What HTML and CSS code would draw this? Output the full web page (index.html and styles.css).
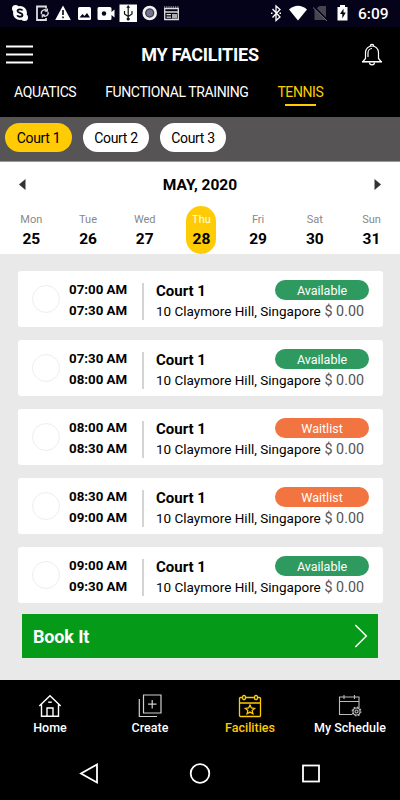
FILE: index.html
```html
<!doctype html>
<html lang="en">
	<head>
	<meta charset="utf-8">
	<title>My Facilities</title>
	<link rel="stylesheet" href="styles.css">
	</head>
	<body>

		<div class="status-bar">
			<svg class="status-left" width="163" height="27" viewBox="0 0 163 27">
				<g fill="#fff">
					<circle cx="20" cy="13" r="7"/>
					<circle cx="15.500" cy="8.500" r="3.500"/>
					<circle cx="24.500" cy="17.500" r="3.500"/>
					<path d="M63 5.500L70.800 20H55.200z"/>
					<rect x="78" y="7" width="13" height="13" rx="1.500"/>
					<path d="M99 7h11a1.500 1.500 0 0 1 1.500 1.500V12l3-2.500v8l-3-2.500v3.500a1.500 1.500 0 0 1-1.500 1.500H99a1.500 1.500 0 0 1-1.500-1.500v-10A1.500 1.500 0 0 1 99 7z"/>
					<path d="M119.500 4.500h17.500v17.500h-17.500z"/>
				</g>
				<path d="M22.500 10.500c-.5-1.500-5-1.800-5 .5 0 2.300 5 1.500 5 4 0 2.300-4.700 2.200-5.300.3" fill="none" stroke="#05031a" stroke-width="1.800"/>
				<path d="M46 8.500V6.500H37V20h9v-2" fill="none" stroke="#ddd" stroke-width="1.800"/>
				<path d="M41.500 14a3.200 3.200 0 0 1 5.500-3M48 12a3.200 3.200 0 0 1-5.500 3M47.300 8.500V11h-2.500M42.300 17.500V15h2.500" fill="none" stroke="#ddd" stroke-width="1.300"/>
				<path d="M63 10v5M63 16.500v1.800" stroke="#05031a" stroke-width="1.600"/>
				<path d="M79.500 17.500l3-3.500 2 2 2.500-3 3 4.500z" fill="#05031a"/>
				<circle cx="104" cy="13.500" r="2.200" fill="#05031a"/>
				<path d="M128.200 7v13M124.500 11v3l3.700 2.500M132 11v3l-3.800 2.500" fill="none" stroke="#111" stroke-width="1.200"/>
				<path d="M128.200 5l1.900 2.800h-3.800z" fill="#111"/>
				<circle cx="128.200" cy="19" r="1.600" fill="#111"/>
				<circle cx="149.700" cy="13" r="6" fill="#77738a" stroke="#f2f2f2" stroke-width="2.600"/>
				<circle cx="149.700" cy="13" r="4" fill="none" stroke="#37344a" stroke-width=".9"/>
			</svg>
			<svg width="18" height="27" viewBox="0 0 18 27">
				<path d="M1.700 8.500h13.600v11H1.700zM1 12h15M3.500 14.700H8M3.500 17.200H8" fill="none" stroke="#ddd" stroke-width="1.300"/>
				<path d="M1 7h15" stroke="#ddd" stroke-dasharray="1.200 1"/>
				<path d="M9 14h5v4.500H9z" fill="#aaa"/>
			</svg>
			<svg class="status-right" width="82" height="27" viewBox="0 0 82 27">
				<path d="M2.500 9l7.500 8-4 3.500V6l4 3.500L2.500 17.500" fill="none" stroke="#fff" stroke-width="1.300"/>
				<path d="M1 13.300h1.500M9.500 13.300H11" stroke="#fff" stroke-width="1.500"/>
				<path d="M19 9.500q9-7.500 18 0L28 20.500z" fill="#fff"/>
				<path d="M44.500 10l5-4h6.500v14H44.500z" fill="#47444f"/>
				<path d="M43 6l15 15" stroke="#05031a" stroke-width="2"/>
				<path d="M43 7.500l14 13.500" stroke="#77747e" stroke-width="1"/>
				<path d="M67.500 7H70V5h5v2h2.500v13.500h-10z" fill="#fff"/>
				<path d="M73.500 8.500L70 14h2.300v4.500l3.500-6h-2.300z" fill="#05031a"/>
			</svg>
			<span class="clock">6:09</span>
		</div>

		<div class="header">
			<svg width="28" height="20" viewBox="0 0 28 20">
				<path d="M0 1.500h27M0 9.500h27M0 17.500h27" stroke="#fff" stroke-width="2"/>
			</svg>
			<h1>MY FACILITIES</h1>
			<svg width="22" height="24" viewBox="0 0 22 24" fill="none" stroke="#fff" stroke-width="1.200">
				<path d="M4.500 15.500V9.500a6.500 6.500 0 0 1 13 0v6l2.500 3H2z"/>
				<path d="M7 14V10A4 4.500 0 0 1 11 5.500M9.300 3a1.700 1.700 0 0 1 3.400 0M8.500 19.500a2.500 2.300 0 0 0 5 0"/>
				<path d="M1 18.800h20" stroke-width="1.500"/>
			</svg>
		</div>

		<div class="sports">
			<a class="sport">AQUATICS</a>
			<a class="sport training">FUNCTIONAL TRAINING</a>
			<a class="sport tennis">TENNIS</a>
		</div>

		<div class="courts">
			<span class="court selected">Court 1</span>
			<span class="court">Court 2</span>
			<span class="court">Court 3</span>
		</div>

		<div class="calendar">
			<div class="month">
				<svg width="7" height="11" viewBox="0 0 7 11"><path d="M6.500 0v11L0 5.500z" fill="#333"/></svg>
				<h2>MAY, 2020</h2>
				<svg width="7" height="11" viewBox="0 0 7 11"><path d="M.5 0v11L7 5.500z" fill="#333"/></svg>
			</div>
			<div class="days">
				<div class="day">Mon<b>25</b></div>
				<div class="day">Tue<b>26</b></div>
				<div class="day">Wed<b>27</b></div>
				<div class="day today">Thu<b>28</b></div>
				<div class="day">Fri<b>29</b></div>
				<div class="day">Sat<b>30</b></div>
				<div class="day">Sun<b>31</b></div>
			</div>
		</div>

		<div class="slots">
			<div class="slot">
				<span class="radio"></span>
				<div class="times">07:00 AM<br>07:30 AM</div>
				<div class="place"><h3>Court 1</h3><p>10 Claymore Hill, Singapore</p></div>
				<div class="state"><span class="badge">Available</span><span class="price">$ 0.00</span></div>
			</div>
			<div class="slot">
				<span class="radio"></span>
				<div class="times">07:30 AM<br>08:00 AM</div>
				<div class="place"><h3>Court 1</h3><p>10 Claymore Hill, Singapore</p></div>
				<div class="state"><span class="badge">Available</span><span class="price">$ 0.00</span></div>
			</div>
			<div class="slot">
				<span class="radio"></span>
				<div class="times">08:00 AM<br>08:30 AM</div>
				<div class="place"><h3>Court 1</h3><p>10 Claymore Hill, Singapore</p></div>
				<div class="state"><span class="badge waitlist">Waitlist</span><span class="price">$ 0.00</span></div>
			</div>
			<div class="slot">
				<span class="radio"></span>
				<div class="times">08:30 AM<br>09:00 AM</div>
				<div class="place"><h3>Court 1</h3><p>10 Claymore Hill, Singapore</p></div>
				<div class="state"><span class="badge waitlist">Waitlist</span><span class="price">$ 0.00</span></div>
			</div>
			<div class="slot">
				<span class="radio"></span>
				<div class="times">09:00 AM<br>09:30 AM</div>
				<div class="place"><h3>Court 1</h3><p>10 Claymore Hill, Singapore</p></div>
				<div class="state"><span class="badge">Available</span><span class="price">$ 0.00</span></div>
			</div>

			<div class="book">
				Book It
				<svg width="14" height="24" viewBox="0 0 14 24"><path d="M1.300 1L12.300 12 1.300 23" fill="none" stroke="#fff" stroke-width="1.500"/></svg>
			</div>
		</div>

		<div class="tabs">
			<div class="tab">
				<svg width="24" height="24" viewBox="0 0 24 24" fill="none" stroke="#fff" stroke-width="1.400">
					<path d="M1.300 12L12 1.800 22.700 12M3.500 10.500v11.800h17V10.500M9 22V14h6v8"/>
					<path d="M10.200 8.200h3.600"/>
				</svg>
				Home
			</div>
			<div class="tab">
				<svg width="24" height="24" viewBox="0 0 24 24" fill="none" stroke="#d0d0d0" stroke-width="1.200">
					<path d="M5.500 1h17.500v18H5.500z"/>
					<path d="M1.300 5v17.500H19M14.200 6v8.500M10 10.200h8.500"/>
				</svg>
				Create
			</div>
			<div class="tab active">
				<svg width="24" height="24" viewBox="0 0 24 24" fill="none" stroke="#fecb04" stroke-width="1.300">
					<path d="M4.500 3.500H2.500q-1 0-1 1v17q0 1 1 1h19q1 0 1-1v-17q0-1-1-1h-2M8 3.500h8M1.500 9h21"/>
					<ellipse cx="6" cy="3.500" rx="1.500" ry="2.200"/>
					<ellipse cx="18" cy="3.500" rx="1.500" ry="2.200"/>
					<path d="M12 11l1.400 3 3.200.4-2.400 2.200.7 3.200-2.900-1.700-2.900 1.700.7-3.200-2.400-2.200 3.200-.4z"/>
				</svg>
				Facilities
			</div>
			<div class="tab">
				<svg width="24" height="24" viewBox="0 0 24 24" fill="none" stroke="#bbb" stroke-width="1.100">
					<path d="M14 20.500H1.500V3H21v11M1.500 7.500H21M6 1v4M16.500 1v4"/>
					<circle cx="18.500" cy="17.500" r="3.500"/>
					<circle cx="18.500" cy="17.500" r="1.500"/>
					<circle cx="18.500" cy="17.500" r="4.400" stroke-dasharray="1.700 1.750"/>
				</svg>
				My Schedule
			</div>
		</div>

		<div class="system-nav">
			<svg width="22" height="22" viewBox="0 0 22 22"><path d="M19 1.500v18L3 10.500z"/></svg>
			<svg width="22" height="22" viewBox="0 0 22 22"><circle cx="11" cy="10.500" r="9.300"/></svg>
			<svg width="22" height="22" viewBox="0 0 22 22"><rect x="3" y="2.500" width="16" height="16"/></svg>
		</div>

	</body>
</html>
```
FILE: styles.css
```css
* {
	box-sizing: border-box;
}

body {
	margin: 0;
	width: 400px;
	height: 800px;
	overflow: hidden;
	background-color: #e9e9e9;
	color: #000;
	font-family: Roboto, sans-serif;
}

h1, h2, h3, p {
	margin: 0;
}

svg {
	display: block;
	flex: none;
}

.status-bar {
	display: flex;
	height: 27px;
	background-color: #05031a;
	color: #fff;
}

.status-right {
	margin-left: 89px;
}

.clock {
	margin-left: 6px;
	font-size: 15.500px;
	font-weight: 500;
	line-height: 28px;
}

.header {
	display: flex;
	align-items: center;
	justify-content: space-between;
	height: 55px;
	padding: 0 17px 0 6px;
	background-color: #000;
	color: #fff;
}

.header h1 {
	padding-left: 5px;
	font-size: 18px;
	font-weight: 700;
	letter-spacing: -.25px;
}

.sports {
	display: flex;
	height: 35px;
	padding-left: 14px;
	background-color: #000;
	color: #fff;
	font-size: 14px;
	letter-spacing: -.4px;
	line-height: 20px;
}

.training {
	margin-left: 29px;
}

.tennis {
	display: flex;
	flex-direction: column;
	align-items: center;
	margin-left: 29px;
	color: #fecb04;
}

.tennis::after {
	content: "";
	width: 31px;
	height: 2px;
	margin-top: 2px;
	background-color: #fecb04;
}

.courts {
	display: flex;
	gap: 11px;
	height: 45px;
	padding: 6px 5px;
	border-bottom: 1px solid #9a9899;
	background-color: #565455;
}

.court {
	width: 66px;
	height: 29px;
	border-radius: 15px;
	background-color: #fff;
	font-size: 14px;
	letter-spacing: -.35px;
	line-height: 30px;
	text-align: center;
}

.court.selected {
	width: 67px;
	background-color: #fecb04;
}

.calendar {
	height: 92px;
	background-color: #fff;
}

.month {
	display: flex;
	align-items: center;
	justify-content: space-between;
	height: 45px;
	margin-bottom: -1px;
	padding: 0 19px;
}

.month h2 {
	font-size: 15.500px;
	font-weight: 700;
}

.days {
	display: grid;
	grid-template-columns: repeat(7, 56.700px);
	padding-left: 3px;
	justify-items: center;
}

.day {
	width: 30px;
	height: 48px;
	padding-top: 6px;
	border-radius: 15px;
	color: #888;
	font-size: 11px;
	line-height: 16px;
	text-align: center;
}

.day b {
	display: block;
	color: #000;
	font-size: 15.500px;
	line-height: 22px;
}

.today {
	background-color: #fecb04;
	color: #fff;
}

.slots {
	height: 426px;
	padding: 17px 17px 0 18px;
}

.slot {
	display: flex;
	height: 56px;
	margin-bottom: 13px;
	padding-left: 14px;
	border-radius: 3px;
	background-color: #fff;
}

.radio {
	width: 28px;
	height: 28px;
	margin-top: 14px;
	border: 1px solid #eee;
	border-radius: 50%;
}

.times {
	width: 75px;
	height: 37px;
	margin: 12px 0 0 9px;
	border-right: 2px solid #d4d4d4;
	font-size: 13.300px;
	font-weight: 700;
	line-height: 21px;
	white-space: nowrap;
}

/* lift the two lines above the top of the divider */
.times::before {
	content: "";
	display: block;
	margin-top: -4px;
}

.place {
	width: 167px;
	margin-left: 12px;
	white-space: nowrap;
}

.place h3 {
	margin-top: 10px;
	font-size: 15px;
	line-height: 20px;
}

.place p {
	font-size: 13.500px;
	line-height: 20px;
}

/* the badge reaches back over the end of the court column */
.state {
	display: flex;
	flex-direction: column;
	align-items: flex-end;
	width: 95px;
	margin: 9px 0 0 -49px;
}

.badge {
	width: 94px;
	height: 20px;
	border-radius: 10px;
	background-color: #2f9a60;
	color: #fff;
	font-size: 12.500px;
	line-height: 21px;
	text-align: center;
}

.waitlist {
	background-color: #f27440;
}

.price {
	margin-right: 5px;
	color: #555;
	font-size: 14.300px;
	line-height: 22px;
}

.book {
	display: flex;
	align-items: center;
	justify-content: space-between;
	height: 44px;
	margin: -2px 5px 0 4px;
	padding: 0 10px 0 11px;
	background-color: #059a17;
	color: #fff;
	font-size: 18px;
	font-weight: 700;
	letter-spacing: -.15px;
}

.tabs {
	display: flex;
	height: 66px;
	padding-top: 14px;
	background-color: #000;
	color: #fff;
}

.tab {
	display: flex;
	flex-direction: column;
	align-items: center;
	width: 100px;
	font-size: 12.500px;
	font-weight: 500;
	line-height: 20px;
}

.tab.active {
	color: #fecb04;
}

.system-nav {
	display: flex;
	gap: 89px;
	height: 54px;
	padding: 17px 0 0 78px;
	background-color: #000;
	fill: none;
	stroke: #fff;
	stroke-width: 1.800;
}
```
